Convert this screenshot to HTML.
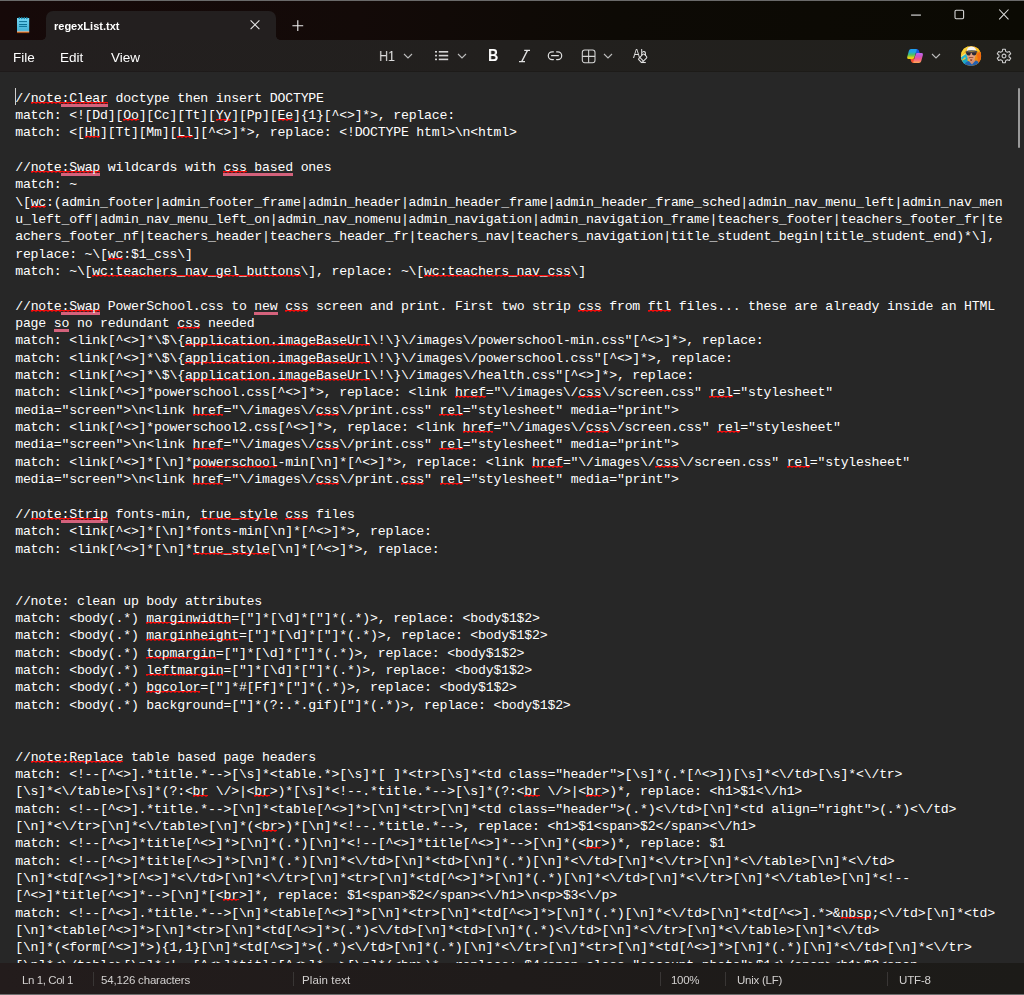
<!DOCTYPE html>
<html lang="en">
<head>
<meta charset="utf-8">
<title>regexList.txt - Notepad</title>
<style>
html,body{margin:0;padding:0;}
body{width:1024px;height:995px;overflow:hidden;background:#272727;position:relative;font-family:"Liberation Sans",sans-serif;color:#fff;}
#win{position:absolute;left:0;top:0;width:1024px;height:995px;overflow:hidden;background:#272727;}
#titlebar{position:absolute;left:0;top:0;width:1024px;height:40px;background:linear-gradient(90deg,#160909 0%,#130a08 35%,#0d0a05 60%,#0b0a03 100%);}
#topline{position:absolute;left:0;top:0;width:1024px;height:1px;background:#6a6a6a;}
#tab{position:absolute;left:46px;top:11px;width:230px;height:29px;background:#231f1f;border-radius:7px 7px 0 0;}
#tabtitle{position:absolute;left:54px;top:18px;font-size:11px;font-weight:bold;line-height:16px;white-space:nowrap;}
#menubar{position:absolute;left:0;top:40px;width:1024px;height:32px;background:linear-gradient(90deg,#231f1f 0%,#22201e 50%,#21201c 100%);}
#tabcl{position:absolute;left:42px;top:36px;width:4px;height:4px;background:radial-gradient(circle at 0 0,rgba(35,31,31,0) 3.5px,#231f1f 4px);}
#tabcr{position:absolute;left:276px;top:36px;width:4px;height:4px;background:radial-gradient(circle at 100% 0,rgba(35,31,31,0) 3.5px,#231f1f 4px);}
.tb{position:absolute;line-height:18px;white-space:nowrap;}
.chev{position:absolute;}
#mbline{position:absolute;left:0;top:71px;width:1024px;height:1px;background:rgba(0,0,0,.14);}
#botline{position:absolute;left:0;top:994px;width:1024px;height:1px;background:#6e6e6e;}
.menu,.st,.tb,#tabtitle{will-change:transform;}
.menu{position:absolute;top:49.5px;font-size:13.5px;line-height:16px;white-space:nowrap;}
#editor{position:absolute;left:0;top:72px;width:1024px;height:891px;background:#272727;overflow:hidden;}
#text{position:absolute;left:15.2px;top:17.6px;margin:0;font-family:"Liberation Mono",monospace;font-size:13.2px;letter-spacing:-0.2px;line-height:17.35px;white-space:pre;color:#fff;}
#text u{text-decoration:none;background:linear-gradient(#f40d0d,#f40d0d) 0 11px/100% 1px no-repeat,linear-gradient(90deg,rgba(225,10,10,.75) 50%,rgba(225,10,10,.1) 50%) 0 12px/4px 1px repeat-x;}
#text i{font-style:normal;padding-bottom:3px;background:linear-gradient(#d4627c,#d4627c) no-repeat 0 13px/100% 3px;}
#caret{position:absolute;left:15px;top:88px;width:1px;height:17px;background:#cfcfcf;}
#scroll{position:absolute;left:1018px;top:88px;width:2px;height:60px;background:#9a9a9a;border-radius:1px;}
#status{position:absolute;left:0;top:963px;width:1024px;height:32px;background:linear-gradient(90deg,#231c1c 0%,#1f1b1a 50%,#1c1b18 100%);}
.st{position:absolute;top:973px;font-size:11.5px;line-height:14px;white-space:nowrap;color:#d2d0cf;}
.sep{position:absolute;top:972px;width:1px;height:14px;background:#393635;}
</style>
</head>
<body>
<div id="win">
<div id="editor"><pre id="text">//<u>note<i>:Clear</i></u> doctype then insert DOCTYPE
match: &lt;![Dd][<u>Oo</u>][Cc][Tt][<u>Yy</u>][Pp][<u>Ee</u>]{1}[^&lt;&gt;]*&gt;, replace: 
match: &lt;[<u>Hh</u>][Tt][Mm][<u>Ll</u>][^&lt;&gt;]*&gt;, replace: &lt;!DOCTYPE html&gt;\n&lt;html&gt;

//<u>note<i>:Swap</i></u> wildcards with <i><u>css</u> based</i> ones
match: ~
\[<u>wc</u>:(admin_footer|admin_footer_frame|admin_header|admin_header_frame|admin_header_frame_sched|admin_nav_menu_left|admin_nav_men
u_left_off|admin_nav_menu_left_on|admin_nav_nomenu|admin_navigation|admin_navigation_frame|teachers_footer|teachers_footer_fr|te
achers_footer_nf|teachers_header|teachers_header_fr|teachers_nav|teachers_navigation|title_student_begin|title_student_end)*\],
replace: ~\[<u>wc</u>:$1_css\]
match: ~\[<u>wc:teachers_nav_gel_buttons</u>\], replace: ~\[<u>wc:teachers_nav_css</u>\]

//<u>note<i>:Swap</i></u> PowerSchool.css to <i>new</i> <u>css</u> screen and print. First two strip <u>css</u> from <u>ftl</u> files... these are already inside an HTML
page <i>so</i> no redundant <u>css</u> needed
match: &lt;link[^&lt;&gt;]*\$\{<u>application.imageBaseUrl</u>\!\}\/images\/powerschool-min.css"[^&lt;&gt;]*&gt;, replace: 
match: &lt;link[^&lt;&gt;]*\$\{<u>application.imageBaseUrl</u>\!\}\/images\/powerschool.css"[^&lt;&gt;]*&gt;, replace: 
match: &lt;link[^&lt;&gt;]*\$\{<u>application.imageBaseUrl</u>\!\}\/images\/health.css"[^&lt;&gt;]*&gt;, replace: 
match: &lt;link[^&lt;&gt;]*powerschool.css[^&lt;&gt;]*&gt;, replace: &lt;link <u>href</u>="\/images\/<u>css</u>\/screen.css" <u>rel</u>="stylesheet"
media="screen"&gt;\n&lt;link <u>href</u>="\/images\/<u>css</u>\/print.css" <u>rel</u>="stylesheet" media="print"&gt;
match: &lt;link[^&lt;&gt;]*powerschool2.css[^&lt;&gt;]*&gt;, replace: &lt;link <u>href</u>="\/images\/<u>css</u>\/screen.css" <u>rel</u>="stylesheet"
media="screen"&gt;\n&lt;link <u>href</u>="\/images\/<u>css</u>\/print.css" <u>rel</u>="stylesheet" media="print"&gt;
match: &lt;link[^&lt;&gt;]*[\n]*<u>powerschool</u>-min[\n]*[^&lt;&gt;]*&gt;, replace: &lt;link <u>href</u>="\/images\/<u>css</u>\/screen.css" <u>rel</u>="stylesheet"
media="screen"&gt;\n&lt;link <u>href</u>="\/images\/<u>css</u>\/print.<u>css</u>" <u>rel</u>="stylesheet" media="print"&gt;

//<u>note<i>:Strip</i></u> fonts-min, <u>true_style</u> <u>css</u> files
match: &lt;link[^&lt;&gt;]*[\n]*fonts-min[\n]*[^&lt;&gt;]*&gt;, replace: 
match: &lt;link[^&lt;&gt;]*[\n]*<u>true_style</u>[\n]*[^&lt;&gt;]*&gt;, replace: 


//note: clean up body attributes
match: &lt;body(.*) <u>marginwidth</u>=["]*[\d]*["]*(.*)&gt;, replace: &lt;body$1$2&gt;
match: &lt;body(.*) <u>marginheight</u>=["]*[\d]*["]*(.*)&gt;, replace: &lt;body$1$2&gt;
match: &lt;body(.*) <u>topmargin</u>=["]*[\d]*["]*(.*)&gt;, replace: &lt;body$1$2&gt;
match: &lt;body(.*) <u>leftmargin</u>=["]*[\d]*["]*(.*)&gt;, replace: &lt;body$1$2&gt;
match: &lt;body(.*) <u>bgcolor</u>=["]*#[Ff]*["]*(.*)&gt;, replace: &lt;body$1$2&gt;
match: &lt;body(.*) background=["]*(?:.*.gif)["]*(.*)&gt;, replace: &lt;body$1$2&gt;


//<u>note:Replace</u> table based page headers
match: &lt;!--[^&lt;&gt;].*title.*--&gt;[\s]*&lt;table.*&gt;[\s]*[ ]*&lt;tr&gt;[\s]*&lt;td class="header"&gt;[\s]*(.*[^&lt;&gt;])[\s]*&lt;\/td&gt;[\s]*&lt;\/tr&gt;
[\s]*&lt;\/table&gt;[\s]*(?:&lt;<u>br</u> \/&gt;|&lt;<u>br</u>&gt;)*[\s]*&lt;!--.*title.*--&gt;[\s]*(?:&lt;<u>br</u> \/&gt;|&lt;<u>br</u>&gt;)*, replace: &lt;h1&gt;$1&lt;\/h1&gt;
match: &lt;!--[^&lt;&gt;].*title.*--&gt;[\n]*&lt;table[^&lt;&gt;]*&gt;[\n]*&lt;tr&gt;[\n]*&lt;td class="header"&gt;(.*)&lt;\/td&gt;[\n]*&lt;td align="right"&gt;(.*)&lt;\/td&gt;
[\n]*&lt;\/tr&gt;[\n]*&lt;\/table&gt;[\n]*(&lt;<u>br</u>&gt;)*[\n]*&lt;!--.*title.*--&gt;, replace: &lt;h1&gt;$1&lt;span&gt;$2&lt;/span&gt;&lt;\/h1&gt;
match: &lt;!--[^&lt;&gt;]*title[^&lt;&gt;]*&gt;[\n]*(.*)[\n]*&lt;!--[^&lt;&gt;]*title[^&lt;&gt;]*--&gt;[\n]*(&lt;<u>br</u>&gt;)*, replace: $1
match: &lt;!--[^&lt;&gt;]*title[^&lt;&gt;]*&gt;[\n]*(.*)[\n]*&lt;\/td&gt;[\n]*&lt;td&gt;[\n]*(.*)[\n]*&lt;\/td&gt;[\n]*&lt;\/tr&gt;[\n]*&lt;\/table&gt;[\n]*&lt;\/td&gt;
[\n]*&lt;td[^&lt;&gt;]*&gt;[^&lt;&gt;]*&lt;\/td&gt;[\n]*&lt;\/tr&gt;[\n]*&lt;tr&gt;[\n]*&lt;td[^&lt;&gt;]*&gt;[\n]*(.*)[\n]*&lt;\/td&gt;[\n]*&lt;\/tr&gt;[\n]*&lt;\/table&gt;[\n]*&lt;!--
[^&lt;&gt;]*title[^&lt;&gt;]*--&gt;[\n]*[&lt;<u>br</u>&gt;]*, replace: $1&lt;span&gt;$2&lt;/span&gt;&lt;\/h1&gt;\n&lt;p&gt;$3&lt;\/p&gt;
match: &lt;!--[^&lt;&gt;].*title.*--&gt;[\n]*&lt;table[^&lt;&gt;]*&gt;[\n]*&lt;tr&gt;[\n]*&lt;td[^&lt;&gt;]*&gt;[\n]*(.*)[\n]*&lt;\/td&gt;[\n]*&lt;td[^&lt;&gt;].*&gt;&amp;<u>nbsp</u>;&lt;\/td&gt;[\n]*&lt;td&gt;
[\n]*&lt;table[^&lt;&gt;]*&gt;[\n]*&lt;tr&gt;[\n]*&lt;td[^&lt;&gt;]*&gt;(.*)&lt;\/td&gt;[\n]*&lt;td&gt;[\n]*(.*)&lt;\/td&gt;[\n]*&lt;\/tr&gt;[\n]*&lt;\/table&gt;[\n]*&lt;\/td&gt;
[\n]*(&lt;form[^&lt;&gt;]*&gt;){1,1}[\n]*&lt;td[^&lt;&gt;]*&gt;(.*)&lt;\/td&gt;[\n]*(.*)[\n]*&lt;\/tr&gt;[\n]*&lt;tr&gt;[\n]*&lt;td[^&lt;&gt;]*&gt;[\n]*(.*)[\n]*&lt;\/td&gt;[\n]*&lt;\/tr&gt;
[\n]*&lt;\/table&gt;[\n]*&lt;!--[^&lt;&gt;]*title[^&lt;&gt;]*--&gt;[\n]*(&lt;<u>br</u>&gt;)*, replace: $4&lt;span class="account-photo"&gt;$1&lt;\/span&gt;&lt;h1&gt;$2&lt;span</pre></div>
<div id="caret"></div>
<div id="scroll"></div>
<div id="titlebar"></div>
<div id="menubar"></div>
<div id="mbline"></div>
<div id="topline"></div>
<div id="tab"></div>
<div id="tabcl"></div>
<div id="tabcr"></div>
<svg id="npicon" width="14" height="18" viewBox="0 0 14 18" style="position:absolute;left:16px;top:16px">
<defs><linearGradient id="npg" x1="0" y1="0" x2="0" y2="1"><stop offset="0" stop-color="#74d6f4"/><stop offset="1" stop-color="#43b2d6"/></linearGradient></defs>
<rect x="1" y="2" width="12.2" height="13.2" fill="url(#npg)"/>
<rect x="1" y="14.9" width="12.2" height="0.9" fill="#f3e6da"/>
<rect x="1" y="15.8" width="12.2" height="1.3" fill="#b5591a"/>
<rect x="2.6" y="1" width="1.4" height="2.2" rx=".7" fill="#1488ad"/><rect x="5.1" y="1" width="1.4" height="2.2" rx=".7" fill="#1488ad"/><rect x="7.6" y="1" width="1.4" height="2.2" rx=".7" fill="#1488ad"/><rect x="10.1" y="1" width="1.4" height="2.2" rx=".7" fill="#1488ad"/>
<rect x="3.1" y="5.1" width="7.9" height="1" fill="#0a6f94"/><rect x="3.1" y="8" width="7.9" height="1" fill="#0a6f94"/><rect x="3.1" y="9.9" width="7.9" height="1" fill="#0a6f94"/>
</svg>
<div id="tabtitle">regexList.txt</div>
<svg width="12" height="12" viewBox="0 0 12 12" style="position:absolute;left:249px;top:19px"><path d="M1.6 1.4 L10.4 10.2 M10.4 1.4 L1.6 10.2" stroke="#e6e6e6" stroke-width="1.1" fill="none"/></svg>
<svg width="14" height="14" viewBox="0 0 14 14" style="position:absolute;left:291px;top:19px"><path d="M6.8 1.3 V12.1 M1.4 6.7 H12.2" stroke="#efefef" stroke-width="1.1" fill="none"/></svg>
<svg width="120" height="24" viewBox="0 0 120 24" style="position:absolute;left:900px;top:3px"><path d="M11.1 12.1 H20.9" stroke="#c4c4c4" stroke-width="1.3" fill="none"/><rect x="55" y="7.2" width="8.6" height="8.6" rx="1.2" fill="none" stroke="#d8d8d8" stroke-width="1.1"/><path d="M99.2 6.5 L108.5 16.3 M108.5 6.5 L99.2 16.3" stroke="#e0e0e0" stroke-width="1.05" fill="none"/></svg>
<div class="menu" style="left:13px">File</div>
<div class="menu" style="left:60px">Edit</div>
<div class="menu" style="left:111px">View</div>
<div class="tb" style="left:379px;top:47px;font-size:14.5px;transform:scaleX(.86);transform-origin:0 0;color:#dedede">H1</div>
<svg class="chev" style="left:403px;top:52px" width="10" height="8" viewBox="0 0 10 8"><path d="M1 2 L5 6 L9 2" stroke="#bdbdbd" stroke-width="1.1" fill="none"/></svg>
<svg width="16" height="12" viewBox="0 0 16 12" style="position:absolute;left:434px;top:50px"><g fill="#d4d4d4"><rect x="1" y="1" width="2" height="1.6"/><rect x="1" y="4.8" width="2" height="1.6"/><rect x="1" y="8.6" width="2" height="1.6"/><rect x="4.8" y="1" width="9.4" height="1.6"/><rect x="4.8" y="4.8" width="9.4" height="1.6"/><rect x="4.8" y="8.6" width="9.4" height="1.6"/></g></svg>
<svg class="chev" style="left:457px;top:52px" width="10" height="8" viewBox="0 0 10 8"><path d="M1 2 L5 6 L9 2" stroke="#bdbdbd" stroke-width="1.1" fill="none"/></svg>
<div class="tb" style="left:487.5px;top:46.5px;font-size:15.8px;transform:scaleX(.9);transform-origin:0 0;font-weight:bold;color:#fff">B</div>
<svg width="16" height="16" viewBox="0 0 16 16" style="position:absolute;left:517px;top:48px"><path d="M7.2 2.4 H13 M2 13.6 H8 M10.5 2.4 L4.7 13.6" stroke="#e0e0e0" stroke-width="1.35" fill="none"/></svg>
<svg width="18" height="12" viewBox="0 0 18 12" style="position:absolute;left:546px;top:50px"><path d="M7.4 1.8 H6.2 A3.9 3.9 0 0 0 6.2 9.6 H7.4 M10.6 1.8 H11.8 A3.9 3.9 0 0 1 11.8 9.6 H10.6 M5.6 5.7 H12.4" stroke="#e0e0e0" stroke-width="1.2" fill="none" stroke-linecap="round"/></svg>
<svg width="16" height="16" viewBox="0 0 16 16" style="position:absolute;left:581px;top:48px"><rect x="1.3" y="2" width="12.7" height="12.7" rx="2.4" fill="none" stroke="#d6d6d6" stroke-width="1.05"/><path d="M7.65 2 V14.7 M1.3 8.35 H14" stroke="#d6d6d6" stroke-width="1.05" fill="none"/></svg>
<svg class="chev" style="left:603px;top:52px" width="10" height="8" viewBox="0 0 10 8"><path d="M1 2 L5 6 L9 2" stroke="#bdbdbd" stroke-width="1.1" fill="none"/></svg>
<svg width="18" height="17" viewBox="0 0 18 17" style="position:absolute;left:632px;top:48px;will-change:transform"><text x="0" y="9.8" font-family="Liberation Sans, sans-serif" font-size="12.4" fill="#e2e2e2" transform="translate(0.9,0) scale(0.86,1)" letter-spacing="0.5">Ab</text><g transform="translate(10.7,10.2) rotate(-45)"><rect x="-3.9" y="-2.6" width="7.8" height="5.2" rx="1.2" fill="#22201e" stroke="#e2e2e2" stroke-width="1.05"/><path d="M-1.5 -2.6 V2.6" stroke="#e2e2e2" stroke-width="1"/></g><path d="M8.8 14.5 H13.8" stroke="#e2e2e2" stroke-width="1.1" fill="none"/></svg>
<svg width="20" height="18" viewBox="0 0 20 18" style="position:absolute;left:905px;top:47px">
<defs><linearGradient id="cpA" x1="0" y1="0" x2="0" y2="1"><stop offset="0" stop-color="#1f9df2"/><stop offset=".3" stop-color="#20a8e0"/><stop offset=".6" stop-color="#4cc262"/><stop offset=".9" stop-color="#f2d40e"/><stop offset="1" stop-color="#f4c810"/></linearGradient>
<linearGradient id="cpB" x1="0" y1="0" x2="0" y2="1"><stop offset="0" stop-color="#c266f4"/><stop offset=".3" stop-color="#c858c8"/><stop offset=".6" stop-color="#f2568c"/><stop offset="1" stop-color="#ffa852"/></linearGradient></defs>
<path d="M9.5 2 H11.6 Q13.3 2 13.9 3.6 L14.9 6.4 H10.8 Z" fill="#1a55e4"/>
<path d="M5.2 11.6 L6.2 14.4 Q6.8 16 8.5 16 H10.6 L9.2 11.6 Z" fill="#f0522e"/>
<path d="M6 2 H11 Q12 2 11.7 3 L9.4 10.6 Q9 11.9 7.6 11.9 H3.6 Q1.6 11.9 2.2 10 L3.9 3.8 Q4.4 2 6 2 Z" fill="url(#cpA)"/>
<path d="M12.5 6 H16.5 Q18.5 6 17.9 8 L16.2 14.2 Q15.7 16 14 16 H9 Q8 16 8.3 15 L10.6 7.4 Q11 6 12.5 6 Z" fill="url(#cpB)"/>
</svg>
<svg class="chev" style="left:931px;top:52px" width="10" height="8" viewBox="0 0 10 8"><path d="M1 2 L5 6 L9 2" stroke="#bdbdbd" stroke-width="1.1" fill="none"/></svg>
<svg width="22" height="22" viewBox="0 0 22 22" style="position:absolute;left:960px;top:45px">
<defs><clipPath id="avc"><circle cx="11" cy="11" r="10.1"/></clipPath></defs>
<g clip-path="url(#avc)"><rect width="22" height="22" fill="#f0b41e"/>
<path d="M14 0 H22 V22 H15 Z" fill="#f08a12"/><path d="M17 9 L22 6 V16 L18 17 Z" fill="#f26a10"/><path d="M15 2 L19 1 L21 6 L17 7 Z" fill="#f6c624"/>
<path d="M0 4 L7 0 L9 2 L0 12 Z" fill="#f8d23a"/><path d="M0 12 L5 8 L7 10 L0 18 Z" fill="#fbe070"/>
<path d="M0 13 L6 9 L8 13 L3 22 H0 Z" fill="#22b6d2"/><path d="M2 15 L5 12 L6 14 L3 17 Z" fill="#f2c22a"/><path d="M0 17 L7 13 L8 17 L4 22 H0 Z" fill="#1aa6c6"/>
<path d="M3 22 Q5 16.4 9 16 L12 17.5 L16 15.6 Q19 16 20 22 Z" fill="#2361ae"/>
<path d="M9.4 14.5 L14.6 14 L15 16 L12 19.6 L9.2 16.6 Z" fill="#d48e70"/>
<path d="M6.6 7 Q6.8 15 11.2 16.6 Q15.6 15.4 16 7 Z" fill="#e0a080"/>
<path d="M6.8 5.8 Q7 1.6 11.6 1.5 Q16 1.8 16.2 5.6 Z" fill="#f4f4f2"/><path d="M5.6 6.4 Q11 4.4 17.4 6.2 L17.2 7.2 Q11 5.6 5.8 7.4 Z" fill="#44505e"/>
<path d="M6 7.6 L10.8 7.8 Q10.8 10.6 8.6 10.6 Q6.4 10.6 6 7.6 Z M11.6 7.8 L16.6 7.4 Q16.4 10.4 14 10.4 Q11.8 10.4 11.6 7.8 Z" fill="#2a2836"/><path d="M6 7.6 L16.6 7.4" stroke="#2a2836" stroke-width=".8"/>
<path d="M8.6 12.6 Q11 11.4 13.4 12.4 L13.2 13.2 Q11 12.4 8.8 13.4 Z" fill="#8a3c2c"/><path d="M10 14.2 H12.4 L12 16 H10.4 Z" fill="#9a4a36"/>
</g></svg>
<svg width="18" height="18" viewBox="-9 -9 18 18" style="position:absolute;left:995px;top:47px"><g fill="none" stroke="#d2d2d2" stroke-width="1.05" stroke-linejoin="round"><path d="M-1.66 -4.63 L-1.36 -6.72 L1.36 -6.72 L1.66 -4.63 L3.34 -3.70 L5.38 -4.49 L6.74 -2.23 L5.00 -0.93 L5.00 0.93 L6.74 2.23 L5.38 4.49 L3.34 3.70 L1.66 4.63 L1.36 6.72 L-1.36 6.72 L-1.66 4.63 L-3.34 3.70 L-5.38 4.49 L-6.74 2.23 L-5.00 0.93 L-5.00 -0.93 L-6.74 -2.23 L-5.38 -4.49 L-3.34 -3.70 Z"/><circle cx="0" cy="0" r="1.9"/></g></svg>
<div id="status"></div>
<div id="botline"></div>
<div class="st" style="left:21.6px;letter-spacing:-0.42px">Ln 1, Col 1</div>
<div class="sep" style="left:93px"></div>
<div class="st" style="left:101px;letter-spacing:-0.18px">54,126 characters</div>
<div class="sep" style="left:293px"></div>
<div class="st" style="left:302px;letter-spacing:0.1px">Plain text</div>
<div class="sep" style="left:660px"></div>
<div class="st" style="left:670.5px;letter-spacing:-0.3px">100%</div>
<div class="sep" style="left:725px"></div>
<div class="st" style="left:736.5px;letter-spacing:-0.25px">Unix (LF)</div>
<div class="sep" style="left:887px"></div>
<div class="st" style="left:898.5px;letter-spacing:-0.15px">UTF-8</div>
</div>
</body>
</html>
